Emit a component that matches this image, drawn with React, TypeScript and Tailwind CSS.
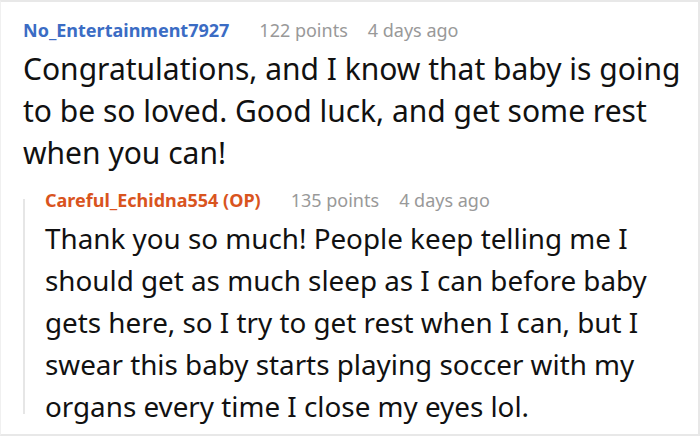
const font = { fontFamily: '"Noto Sans", "Open Sans", sans-serif' };

const Meta = ({ name, color, points, age }: { name: string; color: string; points: string; age: string }) => (
  <div className="flex items-baseline h-[30px] text-[18px] leading-[30px]">
    <span className={`font-bold ${color}`}>{name}</span>
    <span className="ml-[30px] text-[#999999]">{points}</span>
    <span className="ml-[20px] text-[#999999]">{age}</span>
  </div>
);

export default function App() {
  return (
    <div style={font} className="w-[700px] h-[436px] bg-white border-2 border-l border-[#e8e8e8] border-l-[#f0f0f0] overflow-hidden">
      <div className="pl-[22px] pt-[13px]">
        <Meta name="No_Entertainment7927" color="text-[#3b6cc4]" points="122 points" age="4 days ago" />
        <p className="text-[30px] leading-[42px] text-[#111111] mt-[3px] pr-[12px]">
          Congratulations, and I know that baby is going to be so loved. Good luck, and get some rest when you can!
        </p>
        <div className="flex mt-[11px]">
          <div className="w-[2px] bg-[#e6e6e6] mt-[14px] mb-[13px] shrink-0" />
          <div className="pl-[20px] pr-[40px]">
            <Meta name="Careful_Echidna554 (OP)" color="text-[#d9541e]" points="135 points" age="4 days ago" />
            <p className="text-[27.8px] leading-[42px] text-[#111111] mt-[2px]">
              Thank you so much! People keep telling me I should get as much sleep as I can before baby gets here, so I try to get rest when I can, but I swear this baby starts playing soccer with my organs every time I close my eyes lol.
            </p>
          </div>
        </div>
      </div>
    </div>
  );
}
